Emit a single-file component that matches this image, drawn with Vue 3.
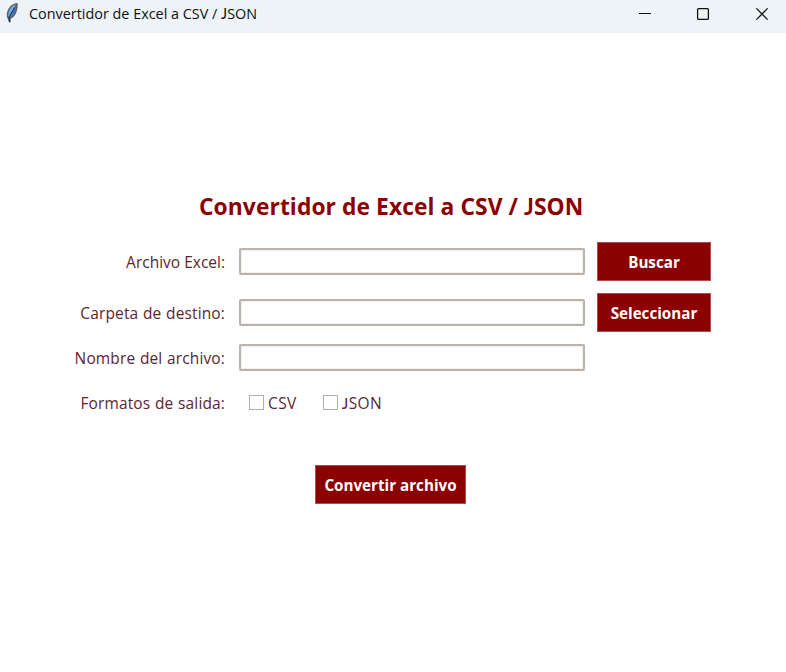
<script setup>
import { ref } from 'vue'

const source = ref('')
const folder = ref('')
const fileName = ref('')
const csv = ref(false)
const json = ref(false)
</script>

<template>
  <div class="window">
    <header class="titlebar">
      <svg class="feather" width="20" height="24" viewBox="0 0 20 24">
        <path d="M17.4 3C13 3.4 9.4 6.2 7.8 10.3C6.5 13 6.4 15.8 7.4 18L9 22.4L10.6 22.2L10.6 18.8C14 17.4 16.4 14 17.2 9.5C17.8 7 18 4.6 17.4 3Z" fill="#59626d" />
        <path d="M15.6 4.6C11.8 6 9.6 9 8.7 12L8 16.2L9 16.4L14.6 7Z" fill="#74a8e6" />
        <path d="M16.3 5.2C16 9.5 14.2 14.6 10.8 17.2L9.6 16.7L14.8 7.4Z" fill="#3f7bcb" />
        <path d="M14.6 7.5L9.1 17L9.7 22" fill="none" stroke="#1c2632" stroke-width="0.9" />
      </svg>
      <span class="caption">Convertidor de Excel a CSV / <span class="j">J</span>SON</span>
      <div class="controls">
        <svg width="58" height="28" viewBox="0 0 58 28"><path d="M22 13.5H34" stroke="#111" /></svg>
        <svg width="58" height="28" viewBox="0 0 58 28"><rect x="22.6" y="8.6" width="10.8" height="10.8" rx="1" fill="none" stroke="#111" stroke-width="1.3" /></svg>
        <svg width="58" height="28" viewBox="0 0 58 28"><path d="M23.4 8.4L34.6 19.6M34.6 8.4L23.4 19.6" stroke="#111" stroke-width="1.3" /></svg>
      </div>
    </header>

    <main>
      <h1>Convertidor de Excel a CSV / <span class="j">J</span>SON</h1>
      <form class="form" @submit.prevent>
        <label for="source">Archivo Excel:</label>
        <input id="source" v-model="source" class="field" type="text" />
        <button class="browse" type="button">Buscar</button>

        <label class="wide" for="folder">Carpeta de destino:</label>
        <input id="folder" v-model="folder" class="field" type="text" />
        <button class="browse" type="button">Seleccionar</button>

        <label class="wide" for="name">Nombre del archivo:</label>
        <input id="name" v-model="fileName" class="field" type="text" />
        <i></i>

        <label class="wide">Formatos de salida:</label>
        <div class="formats">
          <label class="check"><input v-model="csv" type="checkbox" /><span>CSV</span></label>
          <label class="check"><input v-model="json" type="checkbox" /><span><span class="j">J</span>SON</span></label>
        </div>
      </form>
      <button class="convert" type="button">Convertir archivo</button>
    </main>
  </div>
</template>

<style>
body {
  margin: 0;
  background: #fff;
}
</style>

<style scoped>
.window {
  width: 786px;
  height: 672px;
  overflow: hidden;
  background: #fff;
  font-family: "Open Sans", "Noto Sans", sans-serif;
}
.titlebar {
  display: flex;
  height: 33px;
  background: #eef3f8;
}
.feather {
  flex: none;
}
/* A J that rests on the baseline */
.j {
  font-family: Lato, sans-serif;
  line-height: 1;
}
.caption {
  margin-left: 9px;
  font-size: 14.4px;
  line-height: 28px;
  color: #111;
  white-space: nowrap;
}
.controls {
  display: flex;
  margin-left: auto;
  margin-right: -5px;
}
.controls svg {
  flex: none;
}
main {
  display: flex;
  flex-direction: column;
  padding-left: 65px;
}
h1 {
  margin: 156px 0 0 134px;
  height: 53px;
  font-size: 22.8px;
  font-weight: 700;
  line-height: 36px;
  letter-spacing: 0.08px;
  color: #8b0000;
  white-space: nowrap;
}
.form {
  display: grid;
  grid-template-columns: 160px 360px 126px;
  grid-template-rows: 39px 39px 27px 39px;
  row-gap: 12px;
  align-items: center;
}
.form > label {
  text-align: right;
}
.form > .field,
.formats {
  margin-left: 14px;
}
label {
  font-size: 15.5px;
  line-height: 24px;
  color: #5c2630;
  white-space: nowrap;
}
.wide {
  word-spacing: 0.5px;
  letter-spacing: 0.13px;
}
.field {
  box-sizing: border-box;
  width: 346px;
  height: 27px;
  border: 2px solid #b9b4ab;
  border-radius: 2px;
  box-shadow: inset 0 0 0 1px #f4f1ec;
  background: #fff;
  outline: none;
}
button {
  height: 39px;
  padding: 0;
  border: 1px solid #b04c4c;
  background: #8b0000;
  color: #fff;
  font: 700 15.2px/36px "Open Sans", "Noto Sans", sans-serif;
  white-space: nowrap;
}
.browse {
  width: 114px;
  margin-left: 12px;
}
.formats {
  display: flex;
  gap: 26px;
  padding-left: 10px;
}
.check {
  display: flex;
  align-items: center;
  letter-spacing: 0.4px;
}
.check input {
  appearance: none;
  box-sizing: border-box;
  width: 15px;
  height: 15px;
  margin: -1px 4px 0 0;
  border: 1px solid #b4b0a9;
  background: #fff;
}
.convert {
  width: 151px;
  margin: 43px 0 0 250px;
}
</style>
